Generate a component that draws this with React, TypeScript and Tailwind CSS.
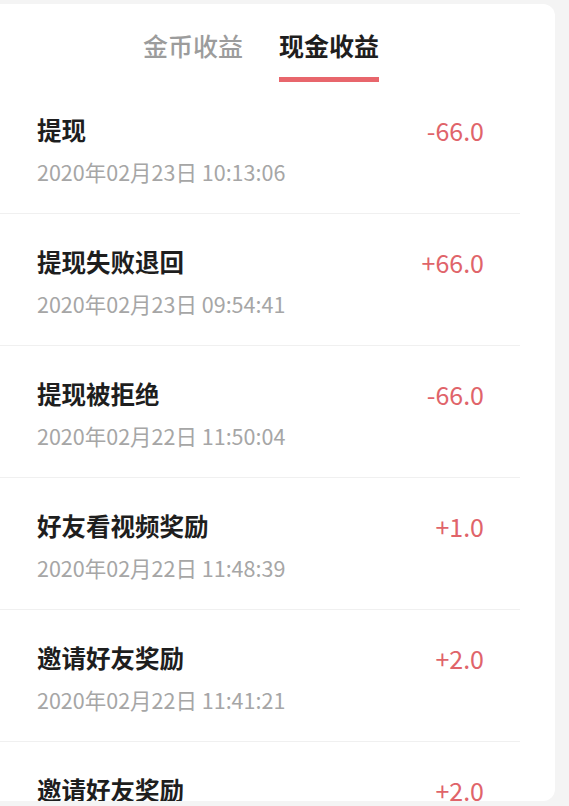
const records = [
  { title: "提现", time: "2020年02月23日 10:13:06", amount: "-66.0" },
  { title: "提现失败退回", time: "2020年02月23日 09:54:41", amount: "+66.0" },
  { title: "提现被拒绝", time: "2020年02月22日 11:50:04", amount: "-66.0" },
  { title: "好友看视频奖励", time: "2020年02月22日 11:48:39", amount: "+1.0" },
  { title: "邀请好友奖励", time: "2020年02月22日 11:41:21", amount: "+2.0" },
  { title: "邀请好友奖励", time: "2020年02月22日 11:38:10", amount: "+2.0" },
];

export default function App() {
  return (
    <div
      className="h-[806px] w-full overflow-hidden bg-[#f4f4f4] pt-[4px]"
      style={{ fontFamily: '"Noto Sans CJK SC", "Noto Sans", sans-serif' }}
    >
      <div className="h-[797px] w-[555px] overflow-hidden rounded-r-[12px] bg-white">
        {/* tabs */}
        <div className="flex gap-[36px] pl-[143px] pt-[23px]">
          <div className="flex flex-col">
            <span className="text-[25px] leading-[36px] font-medium text-[#9c9c9c]">
              金币收益
            </span>
          </div>
          <div className="flex flex-col">
            <span className="text-[25px] leading-[36px] font-bold text-[#1e1e1e]">
              现金收益
            </span>
            <div className="mt-[14px] h-[5px] bg-[#e8666c]" />
          </div>
        </div>

        {/* records */}
        <div className="w-[520px]">
          {records.map((r, i) => (
            <div
              key={i}
              className="flex items-start justify-between border-b border-[#f0f0f0] pt-[30px] pb-[26px] pl-[37px] pr-[36px]"
            >
              <div className="flex flex-col">
                <span className="text-[24.5px] leading-[36px] font-bold text-[#1e1e1e]">
                  {r.title}
                </span>
                <span className="mt-[9px] text-[21.5px] leading-[30px] text-[#a6a6a6]">
                  {r.time}
                </span>
              </div>
              <span className="text-[25px] leading-[36px] text-[#e0646a]">
                {r.amount}
              </span>
            </div>
          ))}
        </div>
      </div>
    </div>
  );
}
